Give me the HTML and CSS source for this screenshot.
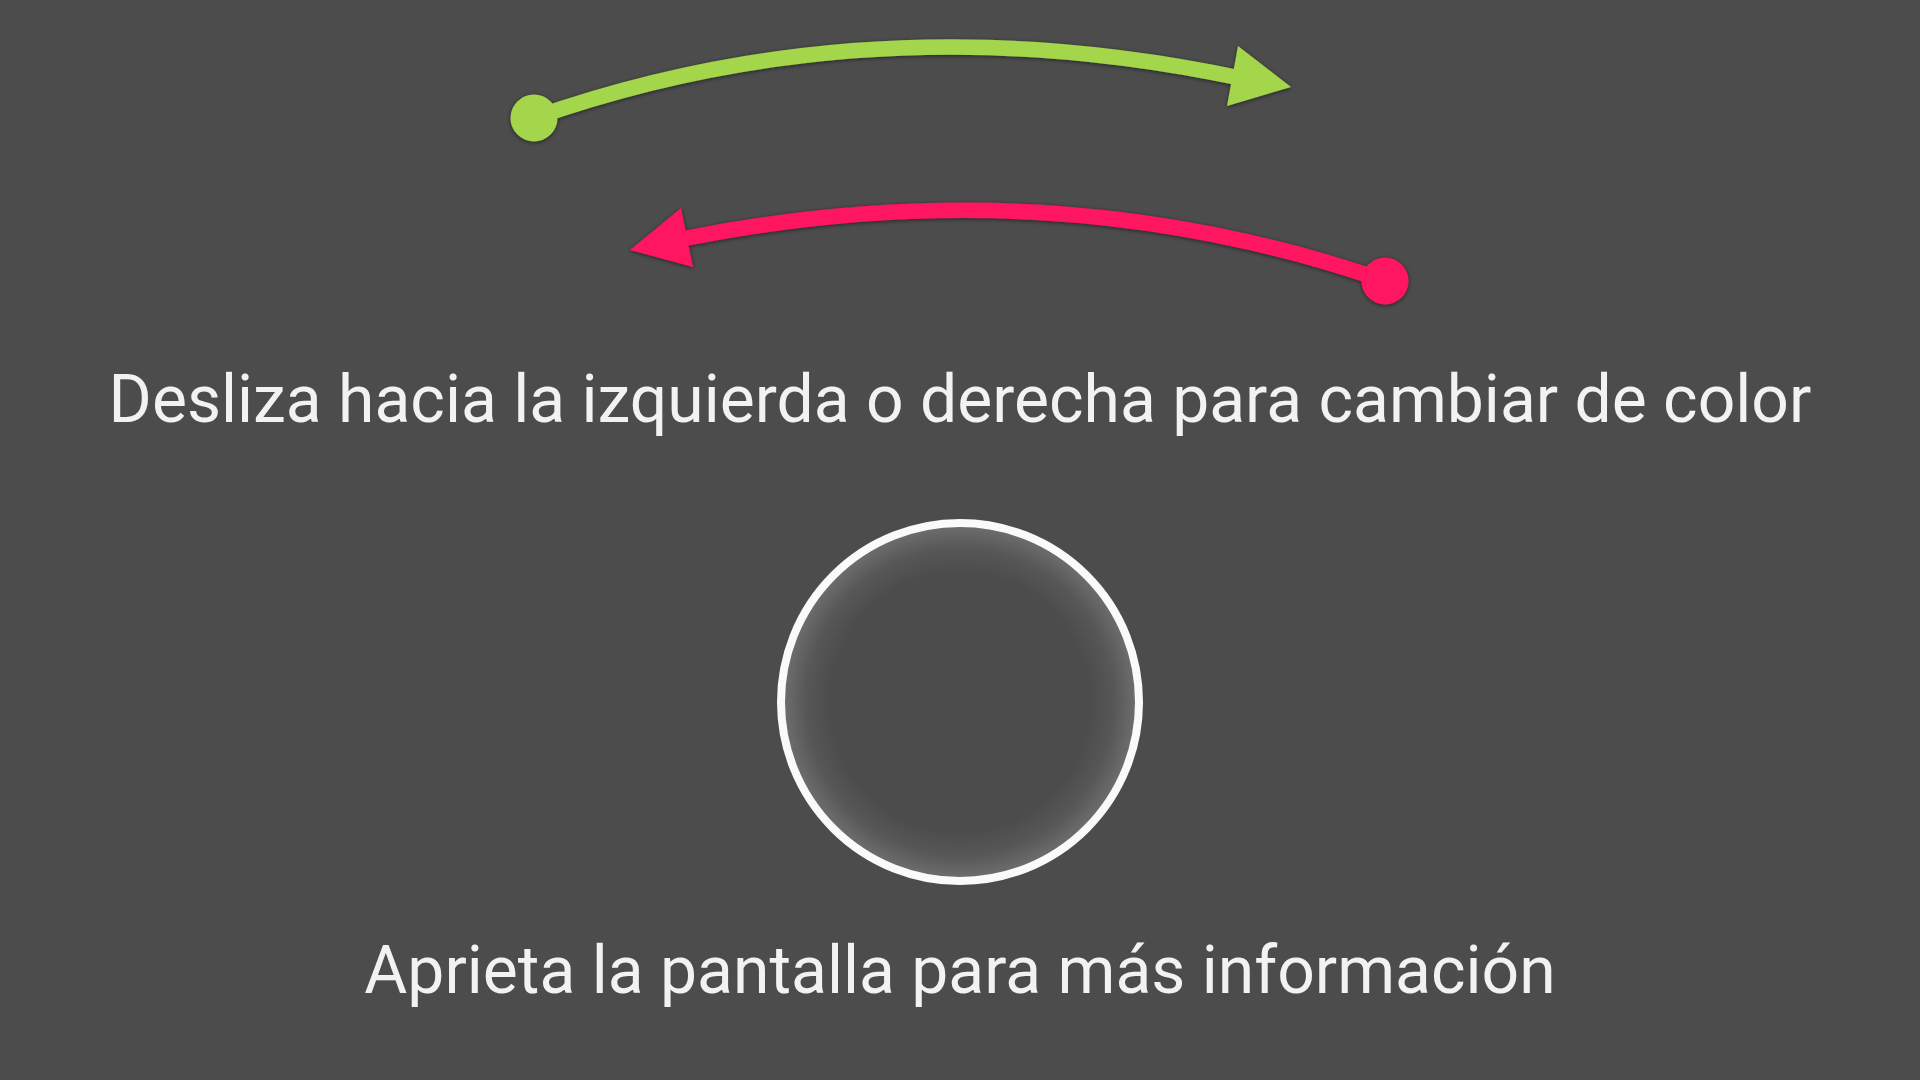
FILE: index.html
```html
<!DOCTYPE html>
<html lang="es">
<head>
<meta charset="utf-8">
<title>Ayuda</title>
<link rel="stylesheet" href="styles.css">
</head>
<body>
<main class="screen">
  <svg class="arrows" viewBox="0 0 1920 320" width="1920" height="320" aria-hidden="true">
    <defs>
      <filter id="sh" x="-10%" y="-50%" width="120%" height="200%">
        <feDropShadow dx="0" dy="1" stdDeviation="2.2" flood-color="#000" flood-opacity="0.55"/>
      </filter>
    </defs>
    <g filter="url(#sh)" fill="#a3d64b">
      <path d="M534 118 Q870 0 1240 78" fill="none" stroke="#a3d64b" stroke-width="15.5"/>
      <circle cx="534" cy="118" r="23.5"/>
      <polygon points="1291,87 1238,46 1227,106"/>
    </g>
    <g filter="url(#sh)" fill="#ff1461">
      <path d="M1385 281 Q1050 165 682 239" fill="none" stroke="#ff1461" stroke-width="15.5"/>
      <circle cx="1385" cy="281" r="23.5"/>
      <polygon points="630,250 681,208 693,267"/>
    </g>
  </svg>
  <p class="hint hint-swipe">Desliza hacia la izquierda o derecha para cambiar de color</p>
  <div class="tap-circle"></div>
  <p class="hint hint-tap">Aprieta la pantalla para más información</p>
</main>
</body>
</html>
```

FILE: styles.css
```css
html, body {
  margin: 0;
  padding: 0;
  background: #4c4c4c;
}

.screen {
  width: 1920px;
  height: 1080px;
  display: flex;
  flex-direction: column;
  align-items: center;
  overflow: hidden;
}

.arrows {
  display: block;
  flex: none;
}

.hint {
  margin: 0;
  font-family: Roboto, "Noto Sans", sans-serif;
  font-weight: 400;
  font-size: 66px;
  line-height: 66px;
  color: #f2f2f2;
  white-space: nowrap;
}

.hint-swipe {
  margin-top: 47px;
}

.tap-circle {
  margin-top: 86px;
  width: 350px;
  height: 350px;
  flex: none;
  border: 8px solid #fafafa;
  border-radius: 50%;
  background: radial-gradient(circle closest-side, #4c4c4c 0%, #4c4c4c 74%, #575757 88%, #6c6c6c 100%);
}

.hint-tap {
  margin-top: 53px;
}
```
